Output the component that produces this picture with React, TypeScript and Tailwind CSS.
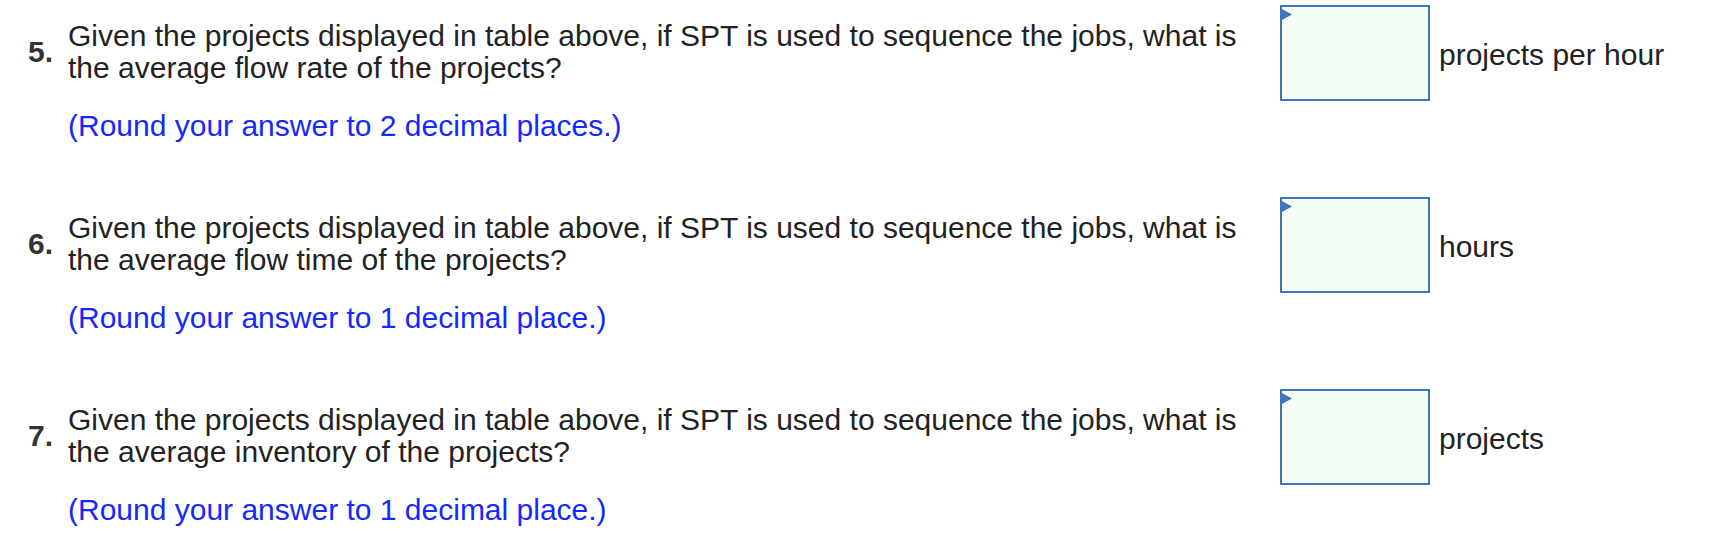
import React from 'react'

interface Question {
  num: number
  line1: string
  line2: string
  hint: string
  unit: string
}

const questions: Question[] = [
  {
    num: 5,
    line1: 'Given the projects displayed in table above, if SPT is used to sequence the jobs, what is',
    line2: 'the average flow rate of the projects?',
    hint: '(Round your answer to 2 decimal places.)',
    unit: 'projects per hour',
  },
  {
    num: 6,
    line1: 'Given the projects displayed in table above, if SPT is used to sequence the jobs, what is',
    line2: 'the average flow time of the projects?',
    hint: '(Round your answer to 1 decimal place.)',
    unit: 'hours',
  },
  {
    num: 7,
    line1: 'Given the projects displayed in table above, if SPT is used to sequence the jobs, what is',
    line2: 'the average inventory of the projects?',
    hint: '(Round your answer to 1 decimal place.)',
    unit: 'projects',
  },
]

function AnswerBox() {
  return (
    <div className="relative w-[150px] h-[96px] border-2 border-[#3d76b9] bg-[#f3fdf3] shrink-0">
      <svg className="absolute -left-[2px] top-[1px]" width="12" height="13" viewBox="0 0 12 13">
        <polygon points="0,0 12,6.5 0,13" fill="#3d76b9" />
      </svg>
    </div>
  )
}

export default function App() {
  return (
    <div className="w-[1716px] h-[556px] bg-white overflow-hidden font-['Liberation_Sans',Arial,sans-serif] text-[#222]">
      {questions.map((q) => (
        <div key={q.num} className="flex h-[192px]">
          <div className="w-[1280px] shrink-0 pt-[20px]">
            <div className="flex items-center">
              <span className="w-[68px] pl-[28px] shrink-0 text-[30px] leading-[32px] font-bold text-[#333]">
                {q.num}.
              </span>
              <p className="text-[30px] leading-[32px]">
                {q.line1}
                <br />
                {q.line2}
              </p>
            </div>
            <p className="ml-[68px] mt-[26px] text-[30px] leading-[32px] text-[#1428ff]">{q.hint}</p>
          </div>
          <div className="flex items-start pt-[5px]">
            <AnswerBox />
            <span className="ml-[9px] mt-[34px] text-[30px] leading-[32px] whitespace-nowrap">{q.unit}</span>
          </div>
        </div>
      ))}
    </div>
  )
}
